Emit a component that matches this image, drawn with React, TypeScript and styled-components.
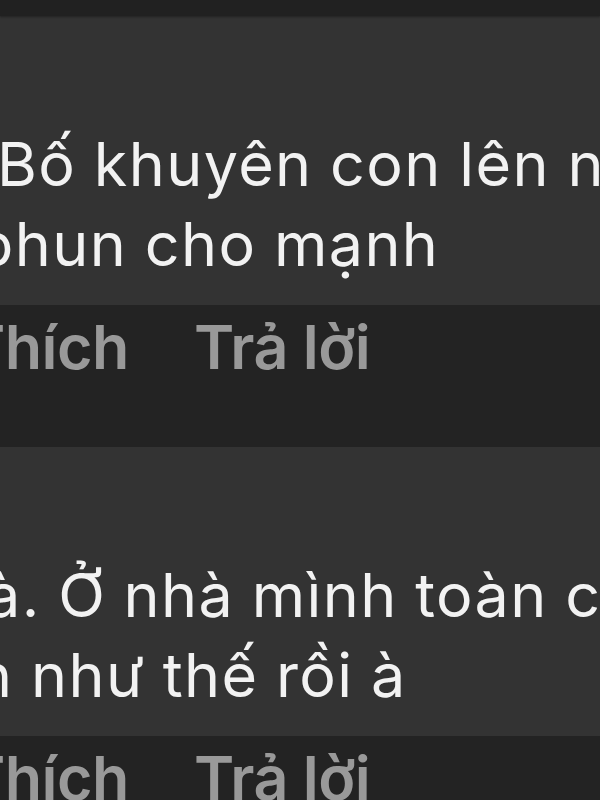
import React from "react";
import styled, { createGlobalStyle } from "styled-components";

interface Comment {
  lines: { text: string; indent: number }[];
}

const comments: Comment[] = [
  {
    lines: [
      { text: "Bố khuyên con lên nhà", indent: -3 },
      { text: "phun cho mạnh", indent: -24 },
    ],
  },
  {
    lines: [
      { text: "à. Ở nhà mình toàn cứ", indent: -14 },
      { text: "n như thế rồi à", indent: -24 },
    ],
  },
];

const App: React.FC = () => {
  return (
    <Screen>
      <GlobalStyle />
      <TopBar />
      {comments.map((comment, i) => (
        <CommentBlock key={i}>
          <Bubble>
            {comment.lines.map((line, j) => (
              <Line key={j} $indent={line.indent}>
                {line.text}
              </Line>
            ))}
          </Bubble>
          <Actions>
            <ActionLink $indent={-35}>Thích</ActionLink>
            <ActionLink>Trả lời</ActionLink>
          </Actions>
        </CommentBlock>
      ))}
    </Screen>
  );
};

export default App;

const GlobalStyle = createGlobalStyle`
  html, body {
    margin: 0;
    padding: 0;
    background: #222222;
  }
`;

const Screen = styled.div`
  width: 600px;
  height: 800px;
  overflow: hidden;
  display: flex;
  flex-direction: column;
  background: #222222;
  font-family: Inter, "Noto Sans", sans-serif;
`;

const TopBar = styled.div`
  height: 16px;
  flex-shrink: 0;
  background: #212121;
  box-shadow: 0 1px 2px rgba(0, 0, 0, 0.35);
  position: relative;
  z-index: 1;
`;

const CommentBlock = styled.div`
  display: flex;
  flex-direction: column;
  flex-shrink: 0;
`;

const Bubble = styled.div`
  height: 289px;
  box-sizing: border-box;
  padding-top: 108px;
  background: #333333;
  display: flex;
  flex-direction: column;
`;

const Line = styled.div<{ $indent: number }>`
  margin-left: ${(p) => p.$indent}px;
  font-size: 61px;
  line-height: 80px;
  letter-spacing: 1.4px;
  word-spacing: -1px;
  color: #f2f2f2;
  white-space: nowrap;
`;

const Actions = styled.div`
  height: 142px;
  box-sizing: border-box;
  padding-top: 2px;
  background: #232323;
  display: flex;
  gap: 65px;
`;

const ActionLink = styled.span<{ $indent?: number }>`
  margin-left: ${(p) => p.$indent ?? 0}px;
  font-size: 61px;
  line-height: 80px;
  font-weight: 600;
  letter-spacing: -0.5px;
  color: #999999;
  white-space: nowrap;
`;
